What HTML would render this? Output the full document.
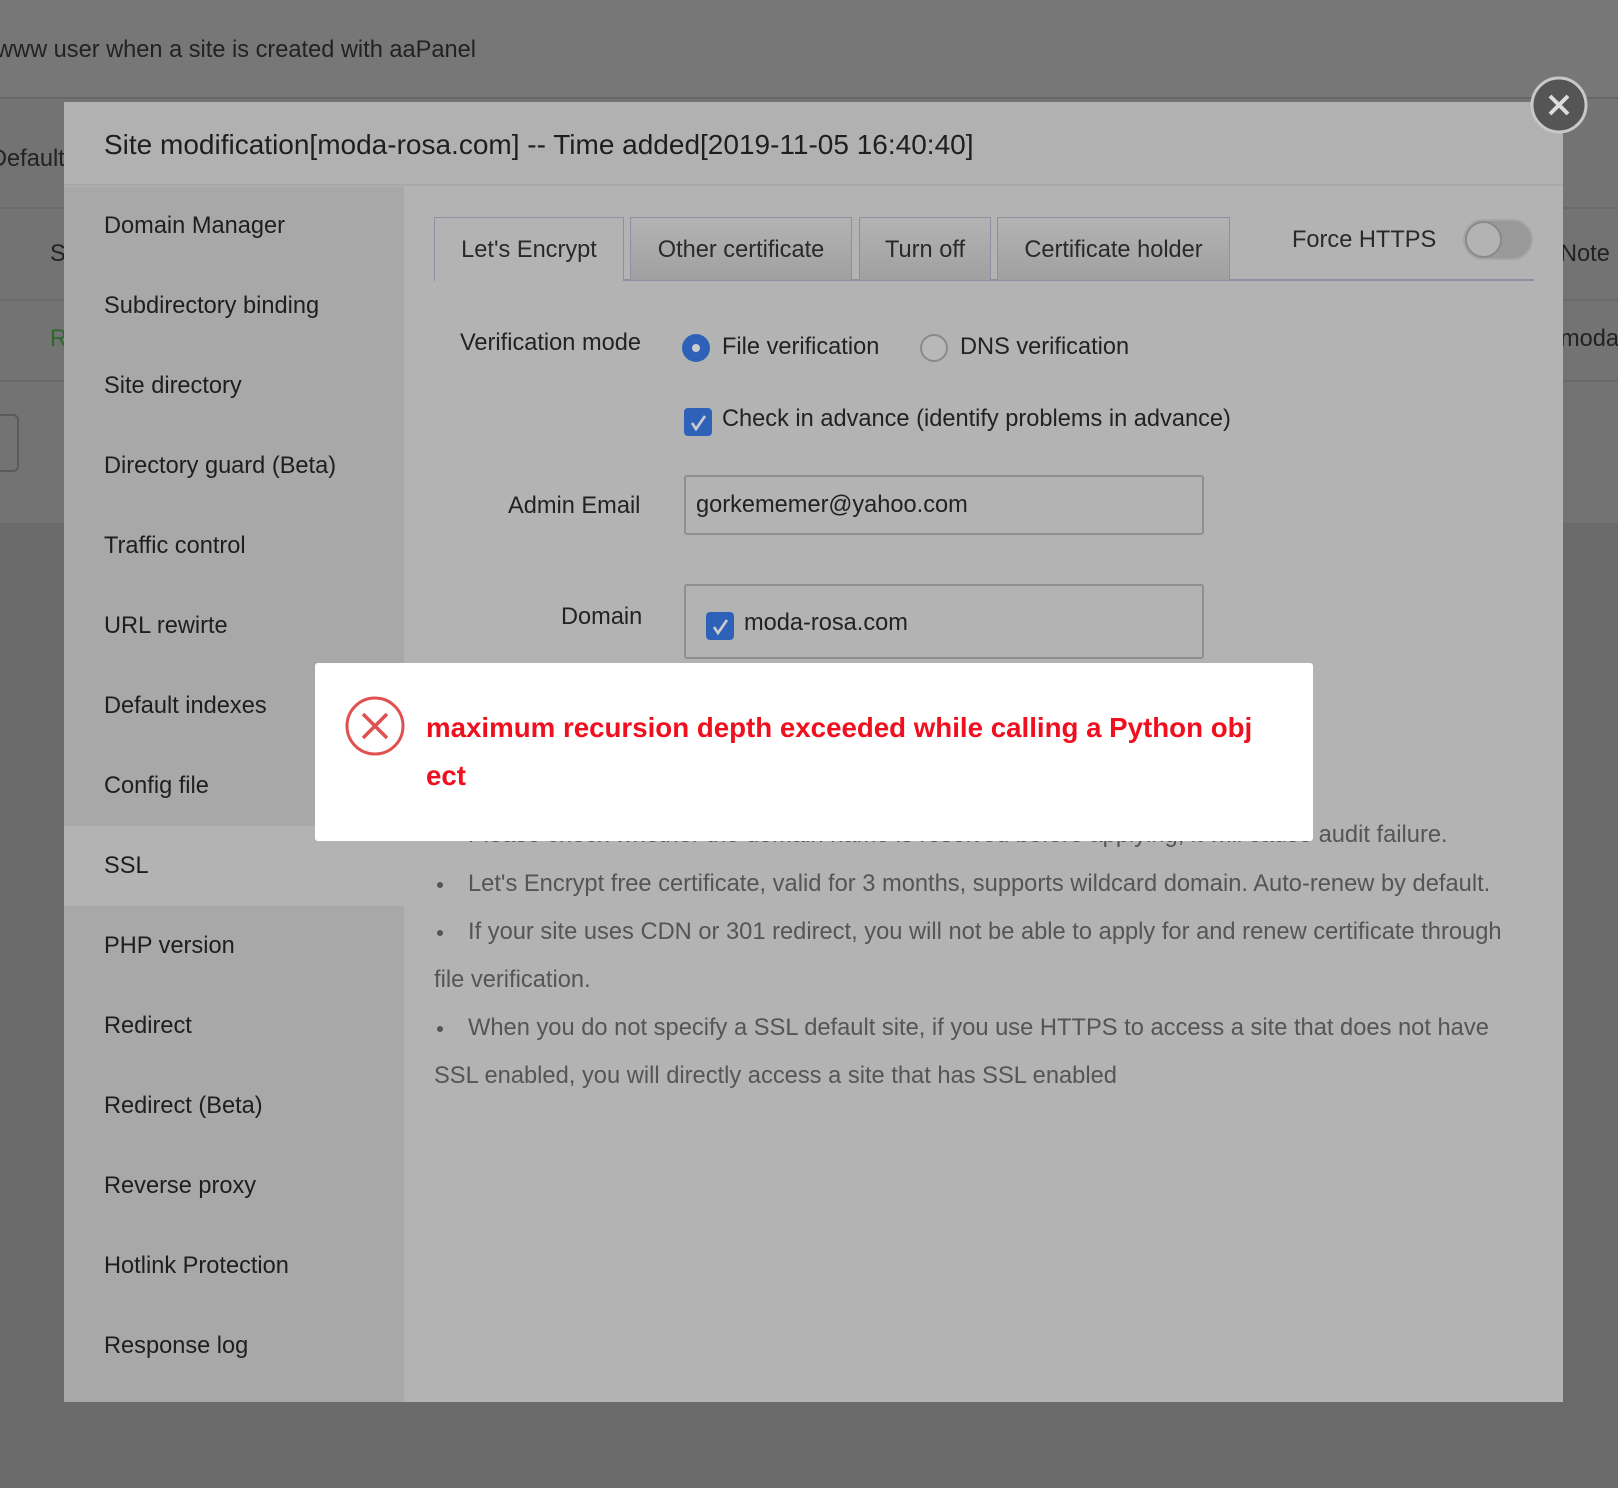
<!DOCTYPE html>
<html><head><meta charset="utf-8"><style>
*{margin:0;padding:0;box-sizing:border-box}
body{width:1618px;height:1488px;overflow:hidden;background:#6b6b6b;font-family:"Liberation Sans",Arial,sans-serif;position:relative}
.a{position:absolute;white-space:nowrap}
.side div{position:absolute;left:40px;font-size:23.6px;color:#1e1e1e}
.tab{position:absolute;top:217px;height:63px;border:1px solid #8f8fa0;border-bottom:none;background:linear-gradient(#b3b3b3,#a0a0a0);font-size:23.6px;color:#2a2a2a;text-align:center;line-height:64px}
.bul{position:absolute;left:434px;font-size:23.7px;color:#555;white-space:nowrap}
.dot{position:absolute;left:437px;width:6px;height:6px;border-radius:50%;background:#555}
.cb{position:absolute;width:28px;height:28px;border-radius:4px;background:#2d62b8}
.t{font-size:23.6px}
</style></head><body>
<div class="a" style="left:0;top:0;width:1618px;height:98px;background:#777"></div>
<div class="a" style="left:0;top:97px;width:1618px;height:2px;background:#666"></div>
<div class="a" style="left:0;top:99px;width:1618px;height:424px;background:#737373"></div>
<div class="a" style="left:0;top:207px;width:1618px;height:2px;background:#6a6a6a"></div>
<div class="a" style="left:0;top:299px;width:1618px;height:2px;background:#6a6a6a"></div>
<div class="a" style="left:0;top:380px;width:1618px;height:2px;background:#6a6a6a"></div>
<div class="a t" style="left:-4px;top:37px;color:#222">www user when a site is created with aaPanel</div>
<div class="a t" style="left:-10px;top:146px;color:#222">Default</div>
<div class="a t" style="left:50px;top:241px;color:#222">S</div>
<div class="a t" style="left:50px;top:326px;color:#2a6a2a">R</div>
<div class="a" style="left:-10px;top:414px;width:29px;height:58px;border:2px solid #5a5a5a;border-radius:6px"></div>
<div class="a t" style="left:1560px;top:241px;color:#222">Note</div>
<div class="a t" style="left:1560px;top:326px;color:#222">moda</div>

<div class="a" style="left:64px;top:102px;width:1499px;height:1300px;background:#b3b3b3"></div>
<div class="a" style="left:64px;top:102px;width:1499px;height:84px;background:#b1b1b1;border-bottom:2px solid #a7a7a7"></div>
<div class="a" style="left:104px;top:129px;font-size:28px;color:#1e1e1e">Site modification[moda-rosa.com] -- Time added[2019-11-05 16:40:40]</div>
<div class="a side" style="left:64px;top:187px;width:340px;height:1215px;background:#a8a8a8">
<div style="left:0;top:639px;width:340px;height:80px;background:#b3b3b3"></div>
<div style="top:26px">Domain Manager</div>
<div style="top:106px">Subdirectory binding</div>
<div style="top:186px">Site directory</div>
<div style="top:266px">Directory guard (Beta)</div>
<div style="top:346px">Traffic control</div>
<div style="top:426px">URL rewirte</div>
<div style="top:506px">Default indexes</div>
<div style="top:586px">Config file</div>
<div style="top:666px">SSL</div>
<div style="top:746px">PHP version</div>
<div style="top:826px">Redirect</div>
<div style="top:906px">Redirect (Beta)</div>
<div style="top:986px">Reverse proxy</div>
<div style="top:1066px">Hotlink Protection</div>
<div style="top:1146px">Response log</div>
</div>
<div class="a" style="left:434px;top:279px;width:1100px;height:2px;background:#8f8fa0"></div>
<div class="tab" style="left:434px;width:190px;background:#b3b3b3;height:64px">Let's Encrypt</div>
<div class="tab" style="left:630px;width:222px">Other certificate</div>
<div class="tab" style="left:859px;width:132px">Turn off</div>
<div class="tab" style="left:997px;width:233px">Certificate holder</div>
<div class="a t" style="left:1292px;top:227px;color:#2a2a2a">Force HTTPS</div>
<div class="a" style="left:1463px;top:219px;width:70px;height:41px;border-radius:21px;background:#999;border:2px solid #a5a5a5"></div>
<div class="a" style="left:1465px;top:221px;width:37px;height:37px;border-radius:50%;background:#b3b3b3;border:2px solid #8a8a8a"></div>

<div class="a t" style="left:460px;top:330px;color:#222">Verification mode</div>
<div class="a" style="left:682px;top:334px;width:28px;height:28px;border-radius:50%;background:#2d62b8"></div>
<div class="a" style="left:692px;top:344px;width:8px;height:8px;border-radius:50%;background:#ccc"></div>
<div class="a t" style="left:722px;top:334px;color:#222">File verification</div>
<div class="a" style="left:920px;top:334px;width:28px;height:28px;border-radius:50%;border:2px solid #8a8a8a;background:#b8b8b8"></div>
<div class="a t" style="left:960px;top:334px;color:#222">DNS verification</div>
<div class="cb" style="left:684px;top:408px"></div>
<svg class="a" style="left:684px;top:408px" width="28" height="28"><path d="M8 15 L12 21 L21 8" stroke="#ccc" stroke-width="2.6" fill="none"/></svg>
<div class="a t" style="left:722px;top:406px;color:#222">Check in advance (identify problems in advance)</div>
<div class="a t" style="left:508px;top:493px;color:#222">Admin Email</div>
<div class="a" style="left:684px;top:475px;width:520px;height:60px;border:2px solid #8f8f8f;border-radius:3px"></div>
<div class="a t" style="left:696px;top:492px;color:#222">gorkememer@yahoo.com</div>
<div class="a t" style="left:561px;top:604px;color:#222">Domain</div>
<div class="a" style="left:684px;top:584px;width:520px;height:75px;border:2px solid #8f8f8f;border-radius:3px"></div>
<div class="cb" style="left:706px;top:612px"></div>
<svg class="a" style="left:706px;top:612px" width="28" height="28"><path d="M8 15 L12 21 L21 8" stroke="#ccc" stroke-width="2.6" fill="none"/></svg>
<div class="a t" style="left:744px;top:610px;color:#222">moda-rosa.com</div>

<div class="bul" style="left:468px;top:822px">Please check whether the domain name is resolved before applying, it will cause audit failure.</div>
<div class="dot" style="top:882px"></div><div class="bul" style="left:468px;top:871px">Let's Encrypt free certificate, valid for 3 months, supports wildcard domain. Auto-renew by default.</div>
<div class="dot" style="top:930px"></div><div class="bul" style="left:468px;top:919px">If your site uses CDN or 301 redirect, you will not be able to apply for and renew certificate through</div>
<div class="bul" style="top:967px">file verification.</div>
<div class="dot" style="top:1026px"></div><div class="bul" style="left:468px;top:1015px">When you do not specify a SSL default site, if you use HTTPS to access a site that does not have</div>
<div class="bul" style="top:1063px">SSL enabled, you will directly access a site that has SSL enabled</div>

<div class="a" style="left:315px;top:663px;width:998px;height:178px;background:#fff;border-radius:3px"></div>
<svg class="a" style="left:344px;top:695px" width="62" height="62"><circle cx="31" cy="31" r="28" fill="none" stroke="#e05050" stroke-width="3"/><path d="M19 19 L43 43 M43 19 L19 43" stroke="#e05050" stroke-width="3.5"/></svg>
<div class="a" style="left:426px;top:712px;font-size:27.7px;font-weight:bold;color:#f00f1e">maximum recursion depth exceeded while calling a Python obj</div>
<div class="a" style="left:426px;top:760px;font-size:27.7px;font-weight:bold;color:#f00f1e">ect</div>

<svg class="a" style="left:1529px;top:75px" width="60" height="60"><circle cx="30" cy="30" r="27" fill="#555" stroke="#c8c8c8" stroke-width="3"/><path d="M21 21 L39 39 M39 21 L21 39" stroke="#ddd" stroke-width="4"/></svg>
</body></html>
